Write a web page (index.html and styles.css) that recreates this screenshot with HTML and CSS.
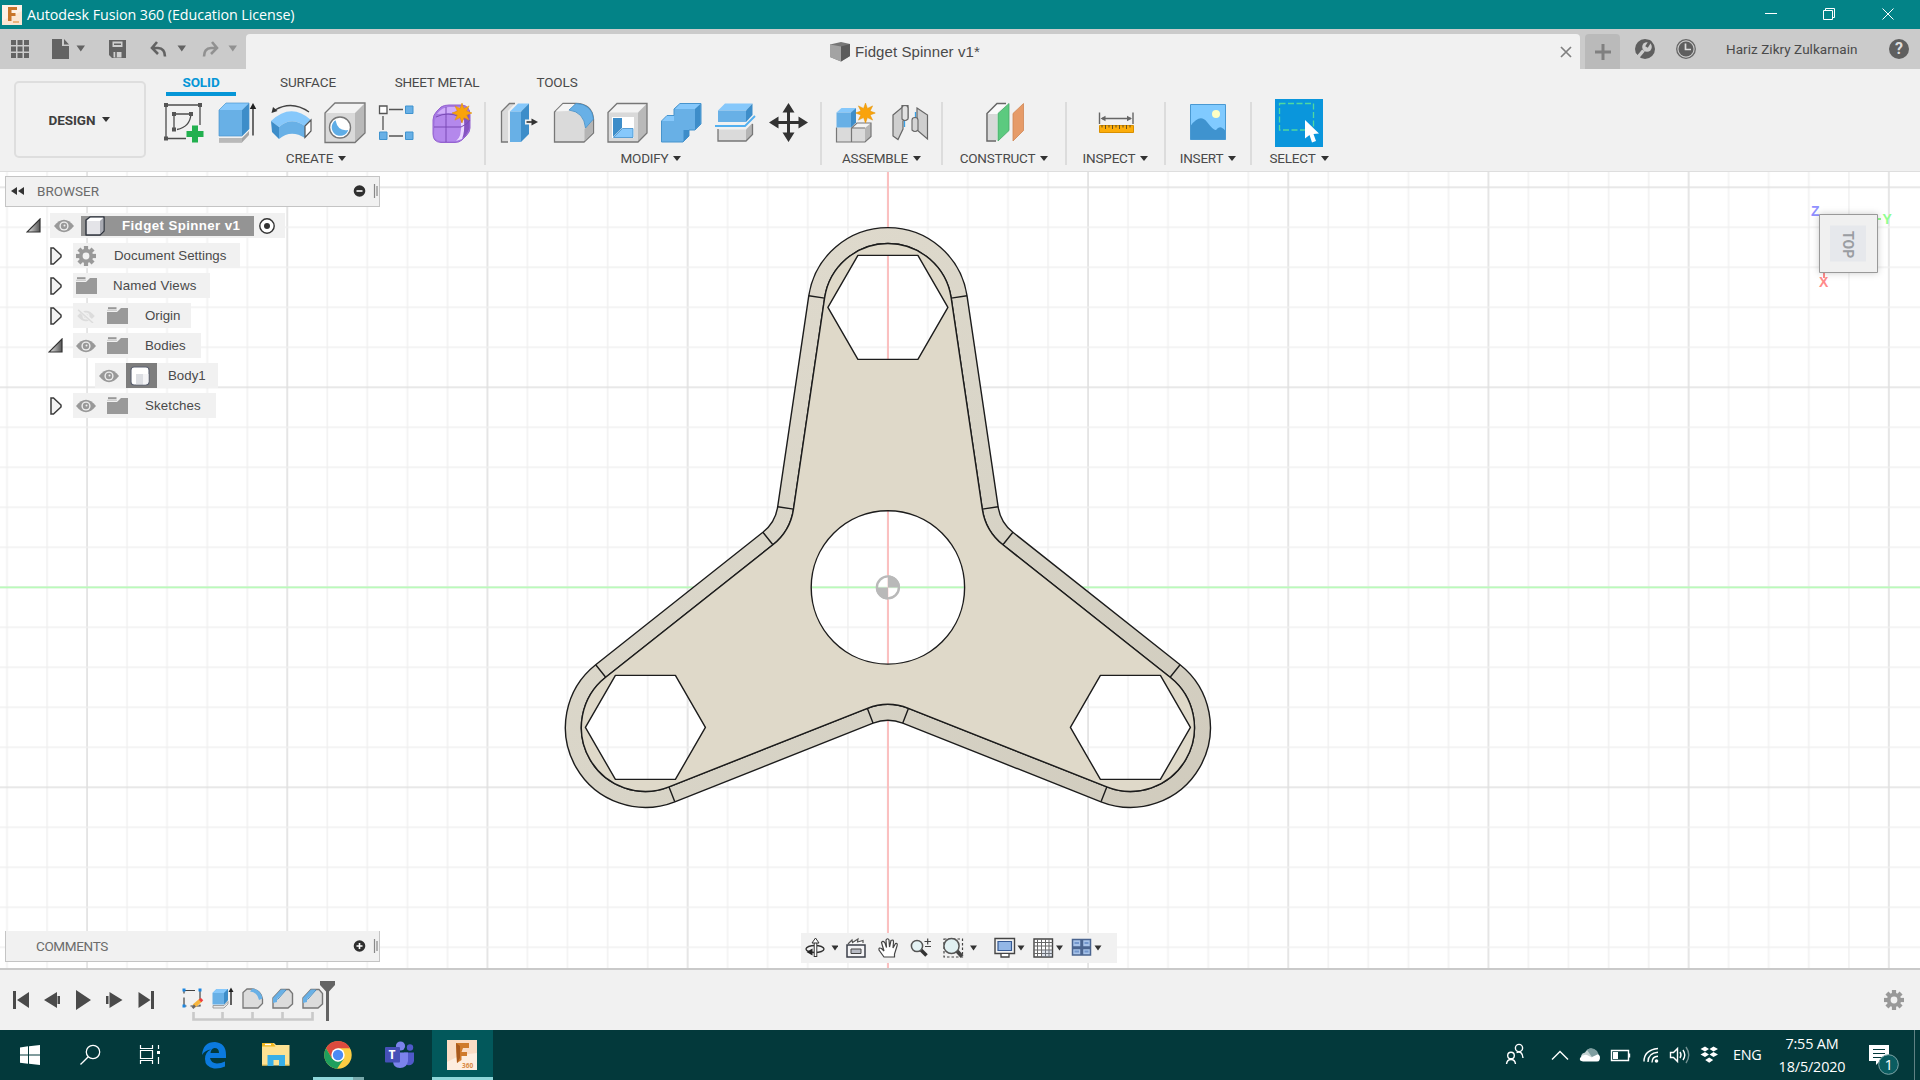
FILE: index.html
```html
<!DOCTYPE html>
<html lang="en">
<head>
<meta charset="utf-8">
<title>Autodesk Fusion 360 (Education License)</title>
<link rel="stylesheet" href="styles.css">
</head>
<body>
<svg class="defs" width="0" height="0" aria-hidden="true">
  <symbol id="star" viewBox="-10 -10 20 20"><polygon fill="#f9a30b" stroke="#e09000" stroke-width=".5" points="0,-10 1.9,-4.6 7.1,-7.1 4.6,-1.9 10,0 4.6,1.9 7.1,7.1 1.9,4.6 0,10 -1.9,4.6 -7.1,7.1 -4.6,1.9 -10,0 -4.6,-1.9 -7.1,-7.1 -1.9,-4.6"/></symbol>
  <symbol id="eye" viewBox="0 0 20 14"><path d="M0 7Q5 .8 10 .8T20 7Q15 13.2 10 13.2T0 7z" fill="#999"/><circle cx="10" cy="7" r="4.6" fill="#eee"/><circle cx="10" cy="7" r="3.2" fill="#999"/><circle cx="10.5" cy="6.5" r="1" fill="#eee"/></symbol>
  <symbol id="eye-off" viewBox="0 0 20 16"><path d="M0 8Q5 2 10 2T20 8Q15 14 10 14T0 8z" fill="#dcdcdc"/><circle cx="10" cy="8" r="4" fill="#efefef"/><circle cx="10" cy="8" r="2.5" fill="#dcdcdc"/><path d="M1 0L19 16" stroke="#f1f1f1" stroke-width="4"/><path d="M1 1L18 16" stroke="#dcdcdc" stroke-width="1.6"/></symbol>
  <symbol id="folder" viewBox="0 0 21 17"><path d="M0 5H10L14 1H21V17H0z" fill="#999"/><path d="M1 1.2H9.5" stroke="#999" stroke-width="2"/><path d="M0 3.3H10" stroke="#c9c9c9" stroke-width="1"/></symbol>
  <symbol id="gear" viewBox="-10 -10 20 20"><g fill="#999"><path id="cog" d="M-2.100 -10H2.100V10H-2.100z"/><use href="#cog" transform="rotate(45)"/><use href="#cog" transform="rotate(90)"/><use href="#cog" transform="rotate(135)"/><circle r="7.2"/></g><circle r="3.4" fill="#f1f1f1"/></symbol>
  <symbol id="closed" viewBox="0 0 12 18"><path d="M1 1H3.5L11 8V10L3.5 17H1z" fill="#f4f4f4" stroke="#3c3c3c" stroke-width="1.5"/></symbol>
  <symbol id="open" viewBox="0 0 15 15"><path d="M14 1V14H1z" fill="url(#tri)" stroke="#333" stroke-width="1.2"/></symbol>
  <linearGradient id="tri"><stop offset="0" stop-color="#eee"/><stop offset="1" stop-color="#555"/></linearGradient>
</svg>

<header class="titlebar">
  <svg class="app-icon" viewBox="0 0 20 20"><path d="M0 0H20V20H0z" fill="#fbe6d3"/><path d="M0 0H20V6L8 12 0 16z" fill="#fdf1e6"/><path d="M6 2H15V5H9.5V8H13.5V11H9.5V16H6z" fill="#c8752a"/><path d="M11 17H17" stroke="#e8a868" stroke-width="1.6"/></svg>
  <span class="app-title">Autodesk Fusion 360 (Education License)</span>
  <svg class="window-buttons" viewBox="1750 0 170 29" fill="none" stroke="#fff"><path d="M1765 13.5H1777M1823.5 10.500H1832.500V19.5H1823.500zM1825.500 10.500V8.500H1834.500V17.500H1832.500M1882.500 8.500L1893.500 19.500M1893.500 8.500L1882.500 19.500"/></svg>
</header>

<div class="tabbar">
  <svg class="quick" viewBox="0 29 246 40">
    <g fill="#636363"><path d="M11 40h5v5h-5zM17.500 40h5v5h-5zM24 40h5v5h-5zM11 46.500h5v5h-5zM17.500 46.500h5v5h-5zM24 46.500h5v5h-5zM11 53h5v5h-5zM17.500 53h5v5h-5zM24 53h5v5h-5z"/><path d="M52 39H62V46H69V59H52z"/><path d="M64 39L69 44.500H64z"/>
    <path d="M76.500 45.500h8.500l-4.200 6zM177.500 45.500h8.500l-4.200 6z"/><path d="M109 40H126V58H112L109 55z"/></g>
    <path d="M112.500 41.500H122.500V47H112.500zM113.500 52H121.500V57.500H113.500z" fill="#d0d0d0"/><path d="M114 44.300H121M116 52V57.500" stroke="#636363" stroke-width="1.500"/>
    <path d="M157 42L152 48 158 54M152.500 48H158Q165 48.500 165 56.500" fill="none" stroke="#636363" stroke-width="2.600"/>
    <g opacity=".55"><path d="M212 42L217 48 211 54M216.500 48H211Q204 48.500 204 56.500" fill="none" stroke="#636363" stroke-width="2.600"/><path d="M228.500 45.500h8.500l-4.200 6z" fill="#636363"/></g>
  </svg>
  <div class="doc-tab">
    <svg class="doc-cube" viewBox="0 0 20 20"><path d="M0 2.500L11 0 20 2 20 14 11 19.500 0 15z" fill="#777"/><path d="M0 2.500L11 4.500V19.500L0 15z" fill="#a3a3a3"/><path d="M11 4.500L20 2V14L11 19.500z" fill="#5b5b5b"/></svg>
    <span>Fidget Spinner v1*</span>
    <svg class="doc-close" viewBox="0 0 12 12"><path d="M1 1L11 11M11 1L1 11" stroke="#808080" stroke-width="1.700"/></svg>
  </div>
  <div class="new-tab"><svg viewBox="0 0 16 16"><path d="M8 0V16M0 8H16" stroke="#808080" stroke-width="3"/></svg></div>
  <svg class="status-icons" viewBox="1620 29 90 40"><circle cx="1645" cy="49" r="10" fill="#5f5f5f"/><path d="M1638 57L1643.500 50.500" stroke="#ccc" stroke-width="3.400"/><circle cx="1647" cy="47" r="4.800" fill="#ccc"/><path d="M1646.500 47L1650.500 40.500" stroke="#5f5f5f" stroke-width="3"/><path d="M1635.500 54L1640 58.500" stroke="#ccc" stroke-width="1.500"/><circle cx="1686" cy="49" r="9.300" fill="none" stroke="#666" stroke-width="1.300"/><circle cx="1686" cy="49" r="7.500" fill="#5f5f5f"/><path d="M1685.500 43.500V49.500H1691" fill="none" stroke="#ddd" stroke-width="1.700"/></svg>
  <span class="user">Hariz Zikry Zulkarnain</span>
  <span class="help">?</span>
</div>

<section class="ribbon">
  <div class="workspace">DESIGN<i class="caret"></i></div>
  <div class="ribbon-main">
    <nav class="tabs"><b class="t-solid">SOLID</b><span class="t-surface">SURFACE</span><span class="t-sheet">SHEET METAL</span><span class="t-tools">TOOLS</span></nav>
    <div class="groups">
      <div class="group create">
        <div class="icons">
          <svg viewBox="156 98 50 50"><path d="M166 105H200V125M166 105V138.500H186M174 114V129M174 114H191Q190 127 177 129.500" fill="none" stroke="#4d4d4d" stroke-width="1.300"/><path d="M164 103h4v4h-4zM198 103h4v4h-4zM164 136.500h4v4h-4zM172 112h4v4h-4zM189 112h4v4h-4zM172 127.500h4v4h-4z" fill="#555"/><path d="M192 125.500h6v5.500h5.500v6h-5.500v5.500h-6v-5.500h-5.500v-6h5.500z" fill="#22b04f"/></svg>
          <svg viewBox="210 98 50 50"><path d="M219 138H242L249 131V135L242 142.500H219z" fill="#a6a6a6"/><path d="M219 138H242V142.500H219z" fill="#b9b9b9"/><path d="M219 110L226 103H249L242 110z" fill="#86c8fb"/><path d="M219 110H242V136H219z" fill="#68b0e6"/><path d="M242 110L249 103V129L242 136z" fill="#3d8dc9"/><path d="M219 110L226 103H249V129L242 136H219z" fill="none" stroke="#4a97cf" stroke-width=".7"/><path d="M253 135.500V107" stroke="#222" stroke-width="1.300"/><path d="M253 103l3.200 6h-6.400z" fill="#222"/></svg>
          <svg viewBox="264 98 50 50"><path d="M271 121Q291 102 311 120L305 126Q291 116 279 127z" fill="#86c8fb"/><path d="M271 121L279 127V139L272 132z" fill="#3d8dc9"/><path d="M279 127Q291 116 305 126V138Q291 129 279 139z" fill="#68b0e6"/><path d="M305 126L311 120V131L305 137.500z" fill="#fff" stroke="#555" stroke-width="1.200"/><path d="M275 110Q292 100 309 112" fill="none" stroke="#444" stroke-width="1.400"/><path d="M271.500 113L273 107 277.500 111z" fill="#333"/></svg>
          <svg viewBox="318 98 50 50"><path d="M325 113L335 103H365L355 113z" fill="#f3f3f3"/><path d="M325 113H355V142.500H325z" fill="#d9d9d9"/><path d="M355 113L365 103V133L355 142.500z" fill="#b9b9b9"/><path d="M325 113L335 103H365V133L355 142.500H325z" fill="none" stroke="#777" stroke-width="1.300"/><circle cx="340" cy="127.500" r="10.500" fill="#fff" stroke="#777" stroke-width="1.400"/><path d="M335.500 120.300A8.500 8.500 0 1 0 348.300 130Q338 132 335.500 120.300z" fill="#5fade6"/></svg>
          <svg viewBox="372 98 50 50"><path d="M389 109.500H403M389 136H403M383 116V130" stroke="#555" stroke-width="1.300"/><path d="M379.500 106h7.500v7.500h-7.500z" fill="#fff" stroke="#555" stroke-width="1.300"/><path d="M405.500 106h7.500v7.500h-7.500zM379.500 132h7.500v7.500h-7.500zM405.500 132h7.500v7.500h-7.500z" fill="#68b0e6" stroke="#3f93cf" stroke-width="1"/></svg>
          <svg viewBox="426 98 50 50"><path d="M433 120Q433 115 437 111L441 107Q444 105 449 105H462Q470 106 470 115V128Q470 132 466 136L462 140Q459 142.500 455 142.500H441Q433 142 433 134z" fill="#a67ae3" stroke="#9562d0" stroke-width="1"/><path d="M435 120Q436 115 442 115H454Q461 115 461 122V134Q461 140 455 141H441Q434 141 434 134z" fill="#b488ec"/><path d="M437 114Q442 107 449 107H460Q455 113 452 113z" fill="#d0adfa"/><path d="M461 120Q469 116 469.500 110V128Q466 138 461 138z" fill="#8654c2"/><path d="M456 141Q462 137 461 123L464 119Q465 132 462 139z" fill="#ead9ff"/><path d="M446 107Q446 112 446 142M434 127H461Q468 124 470 120M436 117Q448 111 460 117" fill="none" stroke="#7a4bb5" stroke-width="1"/><use href="#star" x="452" y="103" width="20" height="20"/></svg>
        </div>
        <span class="label">CREATE<i class="caret"></i></span>
      </div>
      <div class="group modify">
        <div class="icons">
          <svg viewBox="491 98 50 50"><path d="M501.500 111.500L509.500 103.500H515L508 111V142H501.500z" fill="#dadada"/><path d="M508 142H501.500V111.500L509.500 103.500H515" fill="none" stroke="#777" stroke-width="1.300"/><path d="M510 111.500L518 103.500H529L521 111.500z" fill="#86c8fb"/><path d="M510 111.500H521V142H510z" fill="#68b0e6"/><path d="M521 111.500L529 103.500V134L521 142z" fill="#3d8dc9"/><path d="M525 122H534" stroke="#f1f1f1" stroke-width="5"/><path d="M526.500 122H534" stroke="#333" stroke-width="1.600"/><path d="M538 122l-6.500-3.500v7z" fill="#333"/></svg>
          <svg viewBox="545 98 50 50"><path d="M554.500 142V112L563 103.500H576Q592 104 593.500 119V133L584 142z" fill="#dadada" stroke="#777" stroke-width="1.300"/><path d="M555.500 111.500L563 104H575L568 111z" fill="#f5f5f5"/><path d="M584.500 129L593 120V132.500L584.500 141.300z" fill="#b5b5b5"/><path d="M569 110L576 103.500Q592 104 593.500 119L585.500 128Q584 112 569 110z" fill="#68b0e6" stroke="#438fc8" stroke-width=".8"/></svg>
          <svg viewBox="599 98 50 50"><path d="M608 112.500L617 103.500H647L638 112.500z" fill="#f3f3f3"/><path d="M608 112.500H638V142H608z" fill="#d9d9d9"/><path d="M638 112.500L647 103.500V133L638 142z" fill="#b9b9b9"/><path d="M608 112.500L617 103.500H647V133L638 142H608z" fill="none" stroke="#777" stroke-width="1.300"/><path d="M612 117H634V138H612z" fill="#fff"/><path d="M613 118H622V128L613 137z" fill="#3d8dc9"/><path d="M613.500 137.500L622.500 128.500H633V137.500z" fill="#86c8fb" stroke="#3d8dc9" stroke-width=".8"/></svg>
          <svg viewBox="653 98 50 50"><path d="M661.500 121L667 115.500H674V109L680 103.500H701V124L695 130H689V136L683 142H661.500z" fill="#68b0e6" stroke="#4794cd" stroke-width="1"/><path d="M675 109L680 104H700.500L695 109zM662 121L667 116H674V121z" fill="#86c8fb"/><path d="M695 109L700.500 104V124L695 129.500zM683.500 130H689V136L683.500 141.500z" fill="#3d8dc9"/></svg>
          <svg viewBox="707 98 50 50"><path d="M718 110.500L725 103.500H752.500L746 110.500z" fill="#86c8fb"/><path d="M718 110.500H746V122H718z" fill="#68b0e6"/><path d="M746 110.500L752.500 103.500V115L746 122z" fill="#3d8dc9"/><path d="M715 126H745L755 116" fill="none" stroke="#53b0f0" stroke-width="1.800"/><path d="M718 129.500H746V141H718z" fill="#dadada"/><path d="M746 129.500L752.500 123V134.500L746 141z" fill="#b5b5b5"/><path d="M718 129V141H746L752.500 134.500V124" fill="none" stroke="#777" stroke-width="1.300"/></svg>
          <svg viewBox="761 98 50 50"><path d="M788.500 110V135M776 122.500H801" stroke="#333" stroke-width="3"/><path d="M788.500 103l6 9.500h-12zM788.500 142l6-9.500h-12zM769 122.500l9.500-6v12zM808 122.500l-9.500-6v12z" fill="#333"/></svg>
        </div>
        <span class="label">MODIFY<i class="caret"></i></span>
      </div>
      <div class="group assemble">
        <div class="icons">
          <svg viewBox="830 98 50 50"><path d="M851 128L856.500 123H871L865 128z" fill="#f3f3f3"/><path d="M836.500 127.500H865V142H836.500z" fill="#dadada"/><path d="M865 128L871 123V137L865 142z" fill="#b5b5b5"/><path d="M836.500 127.500V142H865L871 136.500V123H857L851.500 128V142M851.500 128H865" fill="none" stroke="#777" stroke-width="1.200"/><path d="M836.500 112.500L841.500 108H856L851.500 112.500z" fill="#86c8fb"/><path d="M836.500 112.500H851V127.500H836.500z" fill="#68b0e6"/><path d="M851 112.500L856 108V122.500L851 127.500z" fill="#3d8dc9"/><use href="#star" x="855.500" y="103" width="20" height="20"/></svg>
          <svg viewBox="884 98 50 50"><path d="M893 115L902 107.500V105.500H908V118L903 121V129L898 139.500 893 136z" fill="#cfcfcf" stroke="#666" stroke-width="1.200"/><path d="M902 108Q902 105.500 905 105.500T908 108V119Q905 122 902 119z" fill="#e2e2e2" stroke="#666" stroke-width="1.100"/><path d="M904.500 121V127M915.500 112V118" stroke="#39a0e5" stroke-width="1.300"/><path d="M917 108L927.500 115V139L917 130z" fill="#cfcfcf" stroke="#666" stroke-width="1.200"/><path d="M912 120Q912 117.500 915 117.500T918 120V130Q915 133 912 130z" fill="#d5d5d5" stroke="#666" stroke-width="1.100"/></svg>
        </div>
        <span class="label">ASSEMBLE<i class="caret"></i></span>
      </div>
      <div class="group construct">
        <div class="icons"><svg viewBox="979 98 50 50"><path d="M987 113.500L997 103.500H1007L998 112V141H987z" fill="#fafafa"/><path d="M988 114H997V140.500H988z" fill="#d9d9d9"/><path d="M996 141H987V113.500L997 103.500H1006" fill="none" stroke="#666" stroke-width="1.500"/><path d="M998 113.500L1009 103.500V130.500L998 141z" fill="#5cca7f" stroke="#47a868" stroke-width=".8"/><path d="M1013 113.500L1023.500 103.500V130.500L1013 141z" fill="#e69b68" stroke="#d08753" stroke-width=".8"/></svg></div>
        <span class="label">CONSTRUCT<i class="caret"></i></span>
      </div>
      <div class="group inspect">
        <div class="icons"><svg viewBox="1091 98 50 50"><path d="M1099.500 112.500V124M1133 112.500V124M1102 118.500H1131" stroke="#666" stroke-width="1.400"/><path d="M1100.500 118.500l5-2.700v5.400zM1132 118.500l-5-2.700v5.400z" fill="#666"/><path d="M1099.500 125.500h34v7h-34z" fill="#fcad0a" stroke="#d99000" stroke-width="1"/><path d="M1102 125v2.500M1105.500 125v4M1109 125v2.500M1112.500 125v4M1116 125v2.500M1119.500 125v4M1123 125v2.500M1126.500 125v4M1130 125v2.500" stroke="#655020" stroke-width="1"/></svg></div>
        <span class="label">INSPECT<i class="caret"></i></span>
      </div>
      <div class="group insert">
        <div class="icons"><svg viewBox="1183 98 50 50"><path d="M1190.500 104.500h35v35h-35z" fill="#80caff"/><path d="M1190.500 126Q1200 113 1207 122T1216 130Q1220 124 1225.500 131V139.500H1190.500z" fill="#3f93cf"/><circle cx="1216" cy="114" r="4" fill="#ffffc4"/><path d="M1190.500 104.500h35v35h-35z" fill="none" stroke="#4a99d2"/></svg></div>
        <span class="label">INSERT<i class="caret"></i></span>
      </div>
      <div class="group select">
        <div class="icons"><svg viewBox="1274 98 50 50"><path d="M1275 99h48v48h-48z" fill="#0a96dc"/><path d="M1279.500 103.500h34v26.500h-34z" fill="none" stroke="#50d8a0" stroke-width="1.300" stroke-dasharray="6 2.500"/><path d="M1305 120V138.500L1309.500 135 1312 142.500 1316 141 1313.500 134 1319 133.500z" fill="#fff"/></svg></div>
        <span class="label">SELECT<i class="caret"></i></span>
      </div>
    </div>
  </div>
</section>

<main class="viewport">
  <svg class="canvas" viewBox="0 172 1920 796">
    <defs>
      <pattern id="grid-x" patternUnits="userSpaceOnUse" x="67.100" y="172" width="200.200" height="796"><path d="M60 0V796M100 0V796M140.100 0V796M180.200 0V796" stroke="#f3f3f3" stroke-width="1.800"/><path d="M20 0V796" stroke="#e4e4e4" stroke-width="1.900"/></pattern>
      <pattern id="grid-y" patternUnits="userSpaceOnUse" x="0" y="167.300" width="1920" height="200"><path d="M0 60H1920M0 100H1920M0 140H1920M0 180H1920" stroke="#f0f0f0" stroke-opacity=".9" stroke-width="1.700"/><path d="M0 20H1920" stroke="#e0e0e0" stroke-width="1.700"/></pattern>
      <linearGradient id="rim" x1="0" y1="0" x2="1" y2="1"><stop offset="0" stop-color="#e2dccf"/><stop offset=".5" stop-color="#d9d5c8"/><stop offset="1" stop-color="#d0cbbd"/></linearGradient>
      <filter id="cube-shadow" x="-30%" y="-30%" width="160%" height="160%"><feDropShadow dx="0" dy="0" stdDeviation="3.500" flood-opacity=".2"/></filter>
    </defs>
    <path d="M0 172H1920V968H0z" fill="url(#grid-x)"/>
    <path d="M0 172H1920V968H0z" fill="url(#grid-y)"/>
    <path d="M0 587.400H1920" stroke="#b9fbb9" stroke-width="1.800"/>
    <path d="M888 172V968" stroke="#fdbcbc" stroke-width="1.800"/>
    <g transform="translate(887.900 587.400)" stroke="#1c1c1c" stroke-width="1.400" stroke-linejoin="round">
      <path fill="url(#rim)" fill-rule="evenodd" d="M-110.200 -80.700L-79.100 -291.700A80 80 0 0 1 79.100 -291.700L110.200 -80.700A40 40 0 0 0 125 -55.100L292.200 77.300A80 80 0 0 1 213.100 214.400L14.800 135.800A40 40 0 0 0 -14.800 135.800L-213.100 214.400A80 80 0 0 1 -292.200 77.300L-125 -55.100A40 40 0 0 0 -110.200 -80.700zM-94.400 -78.300L-63.300 -289.300A64 64 0 0 1 63.300 -289.300L94.400 -78.300A56 56 0 0 0 115 -42.600L282.200 89.800A64 64 0 0 1 218.900 199.500L20.600 120.900A56 56 0 0 0 -20.600 120.900L-218.900 199.500A64 64 0 0 1 -282.200 89.800L-115 -42.600A56 56 0 0 0 -94.400 -78.300z"/>
      <path fill="#dfd9c9" fill-rule="evenodd" d="M-94.400 -78.300L-63.300 -289.300A64 64 0 0 1 63.300 -289.300L94.400 -78.300A56 56 0 0 0 115 -42.600L282.200 89.800A64 64 0 0 1 218.900 199.500L20.600 120.900A56 56 0 0 0 -20.600 120.900L-218.900 199.500A64 64 0 0 1 -282.200 89.800L-115 -42.600A56 56 0 0 0 -94.400 -78.300zM-76.700 0A76.700 76.700 0 0 0 76.700 0A76.700 76.700 0 0 0 -76.700 0zM-60 -280L-30 -332H30L60 -280L30 -228H-30zM-302.500 140L-272.500 88H-212.500L-182.500 140L-212.500 192H-272.500zM182.500 140L212.500 88H272.500L302.500 140L272.500 192H212.500z"/>
      <path d="M-110.200 -80.700L-94.400 -78.300M-79.100 -291.700L-63.300 -289.300M79.100 -291.700L63.300 -289.300M110.200 -80.700L94.400 -78.300M125 -55.100L115 -42.600M292.200 77.300L282.200 89.800M213.100 214.400L218.900 199.500M14.800 135.800L20.600 120.900M-14.800 135.800L-20.600 120.900M-213.100 214.400L-218.900 199.500M-292.200 77.300L-282.200 89.800M-125 -55.100L-115 -42.600"/>
      <g stroke="none"><path fill="#fff" opacity=".7" d="M0 0V-12A12 12 0 0 0 -12 0zM0 0V12A12 12 0 0 0 12 0z"/><path fill="#b9b9b9" d="M0 0V12A12 12 0 0 1 -12 0zM0 0V-12A12 12 0 0 1 12 0z"/><circle r="11" fill="none" stroke="#b9b9b9" stroke-width="2.400"/></g>
    </g>
    <g class="axis-text"><text x="1811" y="216" fill="#9090ff">Z</text><text x="1882.500" y="224" fill="#90ff90">Y</text><text x="1819" y="287" fill="#ff8a8a">X</text></g>
    <path d="M1877 219H1881" stroke="#90ff90" stroke-width="2"/><path d="M1824 273V278" stroke="#ff8a8a" stroke-width="2"/>
    <path d="M1819.500 214.500H1877.500V272.500H1819.500z" fill="#f0f0f0" stroke="#999" filter="url(#cube-shadow)"/>
    <path d="M1830 225.500H1866V261.500H1830z" fill="#e6e8ec"/>
    <text class="face" transform="translate(1842.500 231) rotate(90)">TOP</text>
  </svg>

  <div class="panel browser-head"><svg class="collapse" viewBox="0 0 13 8"><path d="M6 0V8L0 4zM13 0V8L7 4z" fill="#333"/></svg><span>BROWSER</span><svg class="panel-end" viewBox="0 0 26 16"><circle cx="6.500" cy="8" r="5.800" fill="#2f2f2f"/><path d="M3.500 8H9.500" stroke="#fff" stroke-width="1.600"/><path d="M21.500 1V15M24 3V13" stroke="#888" stroke-width="1.200"/></svg></div>

  <div class="tree">
    <div class="row root"><svg class="twist" viewBox="0 0 15 15"><use href="#open"/></svg><div class="cell w235"><svg class="eye"><use href="#eye"/></svg><div class="root-name"><svg class="body" viewBox="0 0 20 20"><path d="M1 4L5 1H19V15L15 19H1z" fill="#e4e4e8" stroke="#333842" stroke-width="1.500" stroke-linejoin="round"/><path d="M2 5L5.500 1.800H18.300L15 5z" fill="#fff"/><path d="M15 5L18.300 2V14.700L15 18z" fill="#a9abb3"/></svg><b>Fidget Spinner v1</b></div><svg class="radio" viewBox="0 0 16 16"><circle cx="8" cy="8" r="7.200" fill="#fff" stroke="#333" stroke-width="1.400"/><circle cx="8" cy="8" r="3" fill="#333"/></svg></div></div>
    <div class="row"><svg class="twist"><use href="#closed"/></svg><div class="cell w167"><svg class="gear"><use href="#gear"/></svg><span>Document Settings</span></div></div>
    <div class="row"><svg class="twist"><use href="#closed"/></svg><div class="cell w137"><svg class="folder first"><use href="#folder"/></svg><span class="spaced">Named Views</span></div></div>
    <div class="row"><svg class="twist"><use href="#closed"/></svg><div class="cell w118"><svg class="eye"><use href="#eye-off"/></svg><svg class="folder"><use href="#folder"/></svg><span>Origin</span></div></div>
    <div class="row"><svg class="twist expanded"><use href="#open"/></svg><div class="cell w128"><svg class="eye"><use href="#eye"/></svg><svg class="folder"><use href="#folder"/></svg><span>Bodies</span></div></div>
    <div class="row leaf"><div class="cell w123"><svg class="eye"><use href="#eye"/></svg><div class="body-box"><svg viewBox="0 0 20 20"><path d="M1 4Q1 1 4 1H16Q19 1 19 4V16Q19 19 16 19H4Q1 19 1 16z" fill="#fff" stroke="#5a6070" stroke-width="1.100"/><path d="M6 8H18.300V16Q18 18.300 16 18.300H6z" fill="#dcdee3"/><path d="M13 8H18.300V16Q18 18.300 13 18.300z" fill="#f4f4f6"/></svg></div><span>Body1</span></div></div>
    <div class="row"><svg class="twist"><use href="#closed"/></svg><div class="cell w143"><svg class="eye"><use href="#eye"/></svg><svg class="folder"><use href="#folder"/></svg><span class="spaced">Sketches</span></div></div>
  </div>

  <div class="panel comments"><span>COMMENTS</span><svg class="panel-end" viewBox="0 0 26 16"><circle cx="6.500" cy="8" r="5.800" fill="#2f2f2f"/><path d="M3.500 8H9.500M6.500 5V11" stroke="#fff" stroke-width="1.600"/><path d="M21.500 1V15M24 3V13" stroke="#888" stroke-width="1.200"/></svg></div>

  <div class="navbar">
    <svg width="37" viewBox="801 933 37 30"><ellipse cx="815" cy="949" rx="9" ry="3.500" fill="none" stroke="#333" stroke-width="1.400"/><path d="M815.500 942V957" stroke="#333" stroke-width="3.600"/><path d="M815.500 941V956" stroke="#fff" stroke-width="1.600"/><path d="M815.500 938l3.500 5h-7z" fill="#fff" stroke="#333"/><path d="M806.500 952l6-3.500v7z" fill="#222"/><path d="M831.500 945.500h7l-3.500 5z" fill="#333"/></svg>
    <svg width="34" viewBox="838 933 34 30"><path d="M847 945H865V957H847z" fill="#f4f4f6" stroke="#3b3f49" stroke-width="1.500"/><path d="M851 949H861V953.500H851z" fill="#b8bbc4" stroke="#444" stroke-width="1"/><path d="M848 944L852 940 852.500 942.500 858 939 857.500 942 863 940.500V943" fill="#fff" stroke="#555" stroke-width="1.200"/></svg>
    <svg width="32" viewBox="872 933 32 30"><path d="M884 957L879 950Q878.500 947 881.500 948.500L884 951 881.500 942.500Q883 940 885 943L886.500 947.500 886 940Q888 937.500 889 940L889.500 947 891 940.500Q893.500 939 893.500 942L893 948 895.500 943.500Q898 943 897 946L894.500 954V957z" fill="#fff" stroke="#444" stroke-width="1.200"/></svg>
    <svg width="34" viewBox="904 933 34 30"><path d="M921 950L926.500 955.500" stroke="#333" stroke-width="3.500"/><circle cx="917" cy="946" r="5.600" fill="#e4f2f4" stroke="#555" stroke-width="1.500"/><path d="M924.500 941.500H931M927.700 938.500V944.500M925 946.500H931" stroke="#444" stroke-width="1.200"/></svg>
    <svg width="44" viewBox="938 933 44 30"><path d="M944 939H962.500V957H944z" fill="none" stroke="#444" stroke-width="1.200" stroke-dasharray="2.500 2"/><path d="M957 951L962 956.500" stroke="#444" stroke-width="4"/><circle cx="951.500" cy="946" r="7.600" fill="#e0f0f2" stroke="#555" stroke-width="1.500"/><path d="M970 945.500h7l-3.500 5z" fill="#333"/></svg>
    <svg width="46" viewBox="982 933 46 30"><path d="M995 938.500H1014.500V953.500H995z" fill="#f4f4f4" stroke="#444" stroke-width="1.400"/><path d="M998 941.500H1011.500V950.500H998z" fill="#93b7e6" stroke="#365a94" stroke-width="1.200"/><path d="M1001 954V957H1009V954" fill="#fff" stroke="#444" stroke-width="1.300"/><path d="M1017.500 945.500h7l-3.500 5z" fill="#333"/></svg>
    <svg width="38" viewBox="1028 933 38 30"><path d="M1034 939H1052.500V957H1034z" fill="#fff" stroke="#444" stroke-width="1.400"/><path d="M1037.500 939V957M1041.500 939V957M1045.500 939V957M1049 939V957M1034 942.500H1052.500M1034 946H1052.500M1034 950H1052.500M1034 953.500H1052.500" stroke="#666" stroke-width="1"/><path d="M1042 950H1052V957H1042z" fill="#7d8fae" opacity=".25"/><path d="M1056 945.500h7l-3.500 5z" fill="#333"/></svg>
    <svg width="38" viewBox="1066 933 38 30"><path d="M1072.500 939.500H1081V947H1072.500zM1082.500 939.500H1090.500V947H1082.500zM1072.500 948.500H1081V955H1072.500zM1082.500 948.500H1090.500V955H1082.500z" fill="#a9c4ea" stroke="#4a648f" stroke-width="1.500"/><path d="M1074.500 943H1079M1084.500 943H1088.500M1074.500 951.500H1079M1084.500 951.500H1088.500" stroke="#7296cc" stroke-width="1.800"/><path d="M1094.500 945.500h7l-3.500 5z" fill="#333"/></svg>
  </div>
</main>

<section class="timeline">
  <svg class="playback" viewBox="0 968 170 62" fill="#4a4a4a"><path d="M13 991h3v18h-3zM29 992v16l-12-8zM57 992v16l-13-8zM57.500 996h2.500v8h-2.500zM76 990v20l15-10zM106 996h2.500v8h-2.500zM109.500 992v16l13-8zM138.500 992v16l12-8zM151 991h3v18h-3z"/></svg>
  <svg class="features" viewBox="170 968 180 62">
    <path d="M193.500 1012V1019.500H312.500V1012M222.500 1012V1019M252.500 1012V1019M282.500 1012V1019" fill="none" stroke="#c9c9c9" stroke-width="2.600"/>
    <path d="M184 990.500H200V1006H184z" fill="none" stroke="#444" stroke-width="1.200" stroke-dasharray="11 4"/><path d="M182.500 988.500h3v3h-3zM198.500 988.500h3v3h-3zM182.500 1004.500h3v3h-3z" fill="#1c86e0"/><path d="M194 1006L201 1000" stroke="#f8b53c" stroke-width="4"/><path d="M200 1001L202 999" stroke="#ef4040" stroke-width="3.500"/><path d="M192.500 1008L195 1005.500" stroke="#666" stroke-width="2.500"/>
    <path d="M213 1005.500H224L228 1001.500V1004L224 1008H213z" fill="#e8e8e8" stroke="#999" stroke-width=".9"/><path d="M212.500 993L216.500 989H228V1000L224 1004.500H212.500z" fill="#68b0e6"/><path d="M212.500 993L216.500 989H228L224 993z" fill="#86c8fb"/><path d="M224 993L228 989V1000L224 1004.500z" fill="#3d8dc9"/><path d="M231 1005V991" stroke="#222" stroke-width="1.400"/><path d="M231 987.500l2.500 4.500h-5z" fill="#222"/>
    <path d="M243 1008V992.500L247 989H252Q261 990 262.500 999V1003.500L258 1008z" fill="#dcdcdc" stroke="#777" stroke-width="1.300"/><path d="M250 991.500L252.500 988.500Q261 990 262.500 998.500L259 1000Q257 992 250 991.500z" fill="#68b0e6"/>
    <g id="chamfer"><path d="M273 1003V1008H288L292.500 1004V993.500L289 989.500H281L273 998z" fill="#dcdcdc" stroke="#777" stroke-width="1.400"/><path d="M273 998L281 989.500H286L277 999V1002L273 1003z" fill="#68b0e6"/><path d="M286 990L277.500 999.500" stroke="#3d8dc9" stroke-width="1"/></g><use href="#chamfer" x="30"/>
    <path d="M320 981H335V985L329 991.500V1021H326V991.500L320 985z" fill="#646464"/>
  </svg>
  <svg class="gear settings"><use href="#gear"/></svg>
</section>

<footer class="taskbar">
  <svg width="60" viewBox="0 1030 60 50"><path d="M20 1047.500L28 1046.300V1054.500H20zM29 1046.200L40 1045V1054.500H29zM20 1055.500H28V1063.800L20 1062.700zM29 1055.500H40V1065L29 1063.800z" fill="#fff"/></svg>
  <svg width="60" viewBox="60 1030 60 50"><circle cx="93" cy="1052" r="6.700" fill="none" stroke="#fff" stroke-width="1.300"/><path d="M88.300 1056.700L80.500 1064.500" stroke="#fff" stroke-width="1.300"/></svg>
  <svg width="64" viewBox="120 1030 64 50"><path d="M140.500 1045V1048.500H152.500V1045M140.500 1064V1060.500H152.500V1064M140.500 1050.500H152.500V1058.500H140.500zM158.500 1045V1049M158.500 1057V1064" fill="none" stroke="#fff" stroke-width="1.200"/><path d="M157 1051h3v3h-3z" fill="#fff"/></svg>
  <svg width="60" viewBox="184 1030 60 50"><path d="M202 1055Q203 1042 215 1042Q226 1043 226 1055V1058H210Q211 1063 217 1063.500Q221 1063.500 225 1061.500V1066.500Q220 1069 214 1068.500Q205 1067 205 1059Q205 1052 211 1049.500Q205 1050 202 1055zM210.500 1053H219Q219 1048 214.500 1048Q211 1048.500 210.500 1053z" fill="#0b7ade" fill-rule="evenodd"/></svg>
  <svg width="63" viewBox="244 1030 63 50"><path d="M262 1043H274L276 1045H289.500V1065.500H262z" fill="#fde293"/><path d="M262 1043H273L275.500 1046.500H262z" fill="#f0b81f"/><path d="M265 1044.500H271" stroke="#fff" stroke-width="1.400"/><path d="M267.500 1055H285V1066H279V1060H273.500V1066H267.500z" fill="#38afe8"/><path d="M262 1065H267M285 1065H289.500" stroke="#e8bd4a" stroke-width="1.200"/></svg>
  <svg width="62" viewBox="307 1030 62 50"><circle cx="338" cy="1055" r="13.700" fill="#fccd43"/><path d="M338 1048.200H350A13.700 13.700 0 0 0 326 1048.200L332 1058.500z" fill="#dc4b3e"/><path d="M326 1048.200A13.700 13.700 0 0 0 337 1068.700L344 1058.500 338 1061.500 332 1058.500z" fill="#1e9f5d"/><circle cx="338" cy="1055" r="6.700" fill="#fff"/><circle cx="338" cy="1055" r="5.200" fill="#4a8af4"/><path d="M313 1077H353V1080H313z" fill="#8fd6d9"/><path d="M353 1077H364V1080H353z" fill="#78a9ab"/></svg>
  <svg class="teams" width="63" viewBox="369 1030 63 50"><circle cx="410" cy="1047.500" r="3.200" fill="#5059c9"/><path d="M404 1052.500H414V1061Q413 1066 407 1065z" fill="#5059c9"/><circle cx="400.500" cy="1046" r="4.600" fill="#7b83eb"/><path d="M394 1052.500H408V1061Q407 1068 400 1068T393 1061z" fill="#7b83eb"/><rect x="385" y="1047" width="15" height="15.500" rx="1" fill="#4650b8"/><text x="388.500" y="1059" fill="#fff">T</text></svg>
  <div class="task-fusion"><svg width="62" viewBox="432 1030 62 50"><path d="M447 1040H477V1070H447z" fill="#fdeee0"/><path d="M447 1040H477V1053Q460 1054 447 1062z" fill="#fadcc4"/><path d="M456 1043H469V1048H463L461.500 1052H467V1056H461.500V1060L457 1063z" fill="#cf7b2c"/><path d="M456 1043L460 1046V1058L457 1063z" fill="#a8581c"/><text class="v360" x="462" y="1068" fill="#d98a45">360</text></svg></div>
  <div class="tray">
    <svg width="246" viewBox="1486 1030 246 50" fill="none" stroke="#fff" stroke-width="1.400"><circle cx="1519" cy="1048" r="3.600"/><circle cx="1511" cy="1055.500" r="3.300"/><path d="M1506.500 1064Q1507 1059.500 1511 1059.500T1515.500 1064M1516.500 1052.500Q1522.500 1050.500 1523 1058"/><path d="M1552 1059.500L1560 1051.500 1568 1059.500"/>
      <g stroke="none"><path d="M1582 1060Q1579 1054 1585 1052.500Q1589 1046 1595 1050L1599 1059z" fill="#c4d2d2"/><path d="M1580 1058Q1583 1054 1587 1055L1592 1057.500Q1593 1052 1598 1054Q1601 1056 1599.500 1060Q1599 1061.500 1597 1061.500H1583Q1579 1061 1580 1058z" fill="#fff"/><path d="M1587 1050Q1592 1046 1597 1051L1598.500 1054 1592 1057z" fill="#7f9ea0"/></g>
      <path d="M1611.500 1050.500H1628.500V1060.500H1611.500zM1629.500 1053.500V1057.500"/><path d="M1613 1052h5v7h-5z" fill="#fff" stroke="none"/>
      <path d="M1644 1061.500Q1644 1050 1658 1048.500M1648 1062Q1648 1053 1658 1052.300M1652 1062.500Q1652 1056.500 1658 1056.300"/><circle cx="1656.500" cy="1061" r="1.800" fill="#fff" stroke="none"/>
      <path d="M1670.500 1052.500H1673.500L1677.500 1048.500V1061.500L1673.500 1057.500H1670.500zM1680 1052Q1682 1055 1680 1058M1683 1050Q1686.500 1055 1683 1060"/><path d="M1686 1047Q1691.500 1055 1686 1063" opacity=".45"/>
      <path d="M1705 1046.500l4 2.500-4 2.500-4.500-2.500zM1713.500 1046.500l4.500 2.500-4.500 2.500-4-2.500zM1705 1052l4 2.500-4 2.500-4.500-2.500zM1713.500 1052l4.500 2.500-4.500 2.500-4-2.500zM1709.200 1057.500l4 2.500-4 2.700-4-2.700z" fill="#fff" stroke="none"/></svg>
    <span class="lang">ENG</span>
    <div class="clock"><span>7:55 AM</span><span>18/5/2020</span></div>
    <svg class="notice" width="56" viewBox="1864 1030 56 50"><path d="M1869 1045H1889V1061H1880L1876 1065V1061H1869z" fill="#fff"/><path d="M1873 1049.500H1885M1873 1053.500H1885M1873 1057.500H1885" stroke="#03393b" stroke-width="1.200"/><circle cx="1888.500" cy="1064.500" r="9.800" fill="#0a5c60" stroke="#7fa5a7"/><text x="1884.500" y="1070" fill="#fff">1</text><path d="M1914.500 1030V1080" stroke="#5f8183"/></svg>
  </div>
</footer>
</body>
</html>
```
FILE: styles.css
```css
* { box-sizing: border-box; }
body { margin: 0; width: 1920px; height: 1080px; overflow: hidden; display: flex; flex-direction: column; background: #fff; color: #4a4a4a; font-family: Roboto, sans-serif; }
svg { display: block; flex: none; }
.defs { position: absolute; }

.titlebar { height: 29px; display: flex; align-items: center; background: #038387; color: #fff; }
.app-icon { width: 20px; height: 20px; margin: 0 5px 0 2px; }
.app-title { font: 14.300px "Open Sans", sans-serif; letter-spacing: -0.070px; white-space: nowrap; }
.window-buttons { width: 170px; height: 29px; margin-left: auto; }

.tabbar { height: 40px; display: flex; background: #cbcbcb; }
.quick { width: 246px; height: 40px; }
.doc-tab { width: 1334px; height: 35px; margin-top: 5px; padding: 0 8px 0 584px; border-radius: 4px 4px 0 0; background: #f1f1f1; display: flex; align-items: center; gap: 5px; font: 15px "Liberation Sans", sans-serif; letter-spacing: 0.080px; }
.doc-cube { width: 20px; height: 20px; }
.doc-close { width: 12px; height: 12px; margin-left: auto; }
.new-tab { width: 35px; height: 35px; margin: 5px 0 0 5px; border-radius: 4px 4px 0 0; background: #bababa; display: grid; place-items: center; }
.new-tab svg { width: 16px; height: 16px; }
.status-icons { width: 90px; height: 40px; }
.user { margin-left: 16px; width: 145px; line-height: 40px; font-size: 13.500px; letter-spacing: 0.050px; white-space: nowrap; }
.help { width: 20px; height: 20px; margin: 10px 0 0 18px; border-radius: 50%; background: #5f5f5f; color: #ddd; font-size: 16px; font-weight: 700; line-height: 20px; text-align: center; }

.ribbon { height: 103px; display: flex; padding-left: 14px; background: #f1f1f1; border-bottom: 1px solid #dedede; font-size: 13.500px; }
.workspace { width: 132px; height: 77px; margin: 12px 1px 0 0; padding-right: 1px; border: 2px solid #dedede; border-radius: 5px; display: flex; align-items: center; justify-content: center; gap: 7px; font-weight: 700; color: #3e3e3e; letter-spacing: -0.100px; }
.caret { width: 0; height: 0; border: 4px solid transparent; border-top: 5px solid #333; border-bottom: 0; }
.ribbon-main { display: flex; flex-direction: column; }
.tabs { height: 27px; display: flex; padding-left: 19px; line-height: 26px; text-align: center; white-space: nowrap; letter-spacing: -0.100px; }
.t-solid { width: 70px; color: #0696d7; border-bottom: 4px solid #0696d7; }
.t-surface { width: 144px; }
.t-sheet { width: 114px; letter-spacing: -0.250px; }
.t-tools { width: 126px; }
.groups { display: flex; }
.group { height: 75px; display: flex; flex-direction: column; align-items: center; position: relative; }
.group:not(.select)::after { content: ""; position: absolute; right: -1px; top: 6px; width: 2px; height: 63px; background: #dcdcdc; }
.icons { display: flex; gap: 4px; padding-top: 2px; }
.icons svg { width: 50px; height: 50px; }
.label { display: flex; align-items: center; gap: 5px; line-height: 16px; margin-top: 2px; white-space: nowrap; letter-spacing: -0.200px; }
.create { width: 338px; }
.modify { width: 336px; padding-right: 4px; }
.assemble { width: 121px; }
.construct { width: 124px; }
.inspect { width: 99px; }
.insert { width: 86px; }
.select { width: 96px; }

.viewport { height: 796px; position: relative; }
.canvas { position: absolute; left: 0; top: 0; width: 1920px; height: 796px; }
.axis-text { font: 700 14px "Liberation Sans", sans-serif; }
.face { font: 700 14px Roboto, sans-serif; fill: #9a9da2; }
.panel { position: absolute; left: 5px; width: 375px; height: 31px; display: flex; align-items: center; background: #f1f1f1; border: 1px solid #c4c4c4; color: #6b6b6b; font-size: 13.500px; letter-spacing: -0.350px; }
.browser-head { top: 4px; padding: 0 0 2px 5px; gap: 13px; letter-spacing: 0; }
.collapse { width: 13px; height: 8px; }
.comments { top: 759px; padding-left: 30px; border-top: 0; }
.panel-end { width: 26px; height: 16px; margin-left: auto; }

.tree { position: absolute; left: 0; top: 41px; display: flex; flex-direction: column; gap: 5px; font: 13.300px "Liberation Sans", sans-serif; }
.row { height: 25px; display: flex; align-items: center; padding-left: 50px; }
.row.root { padding-left: 26px; }
.row.leaf { padding-left: 95px; }
.twist { width: 12px; height: 18px; margin-right: 11px; }
.root .twist { width: 15px; height: 15px; margin-right: 9px; }
.twist.expanded { width: 15px; height: 15px; margin: 0 10px 0 -2px; }
.cell { height: 25px; display: flex; align-items: center; padding-left: 3px; background: #f1f1f1; white-space: nowrap; }
.root .cell, .leaf .cell { padding-left: 4px; }
.eye { width: 20px; height: 14px; margin-right: 11px; }
.folder { width: 21px; height: 17px; margin-right: 17px; }
.folder.first { margin: 0 16px 0 0; }
.gear { width: 20px; height: 20px; }
.cell .gear { margin: 0 18px 0 0; }
.root .eye { margin-right: 7px; }
.root-name { width: 173px; height: 20px; display: flex; align-items: center; gap: 17px; padding-left: 4px; background: #949494; color: #fff; letter-spacing: 0.400px; }
.spaced { letter-spacing: 0.150px; }
.body { width: 20px; height: 20px; }
.radio { width: 16px; height: 16px; margin-left: 5px; }
.body-box { width: 31px; height: 25px; margin: 0 11px 0 -4px; background: #7d7d7d; display: grid; place-items: center; }
.body-box svg { width: 20px; height: 20px; margin-right: 4px; }
.w235 { width: 235px; }
.w167 { width: 167px; }
.w137 { width: 137px; }
.w118 { width: 118px; }
.w128 { width: 128px; }
.w123 { width: 123px; }
.w143 { width: 143px; }

.navbar { position: absolute; left: 801px; top: 761px; width: 316px; height: 30px; display: flex; background: #f1f1f1; }
.navbar svg { height: 30px; }

.timeline { height: 62px; display: flex; background: #f1f1f1; border-top: 2px solid #c9c9c9; }
.playback { width: 170px; height: 62px; margin-top: -2px; }
.features { width: 180px; height: 62px; margin-top: -2px; }
.settings { margin: 20px 16px 0 auto; }

.taskbar { height: 50px; display: flex; background: #03393b; color: #fff; font-family: "Open Sans", sans-serif; }
.taskbar svg { height: 50px; }
.task-fusion { width: 61px; background: #02585b; border-bottom: 3px solid #8fd6d9; overflow: hidden; }
.teams text { font: 700 12px "Open Sans", sans-serif; }
.v360 { font: 700 6.500px "Open Sans", sans-serif; }
.tray { margin-left: auto; display: flex; }
.lang { width: 40px; padding-left: 1px; line-height: 50px; font-size: 14.400px; letter-spacing: -0.300px; }
.clock { width: 92px; padding: 2px 12px 0 0; display: flex; flex-direction: column; align-items: center; font-size: 14.400px; line-height: 23px; letter-spacing: -0.150px; }
.notice text { font: 15px "Open Sans", sans-serif; }
```
